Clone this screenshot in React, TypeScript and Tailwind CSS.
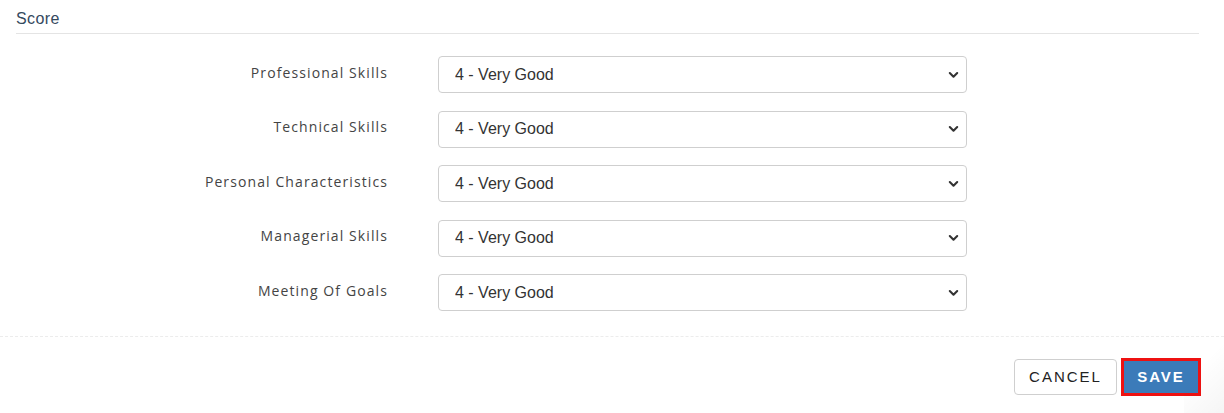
import React from "react";

const rows = [
  "Professional Skills",
  "Technical Skills",
  "Personal Characteristics",
  "Managerial Skills",
  "Meeting Of Goals",
];

function Chevron() {
  return (
    <svg width="11" height="8" viewBox="0 0 11 8" className="absolute right-[8px] top-1/2 -translate-y-1/2 pointer-events-none">
      <path d="M1.8 2 L5.5 5.7 L9.2 2" fill="none" stroke="#333" strokeWidth="2.1" strokeLinecap="round" strokeLinejoin="round" />
    </svg>
  );
}

export default function App() {
  return (
    <div className="w-[1224px] h-[413px] bg-white relative overflow-hidden" style={{ fontFamily: '"Liberation Sans", Arial, sans-serif' }}>
      <div className="px-4">
        <div className="pt-[9px] pb-[5px] border-b border-[#e4e4e4] mr-[9px] text-[16px] leading-[19px] tracking-[0.4px] text-[#34495e]">
          Score
        </div>
        <div className="flex flex-col gap-[17.5px] pt-[22px]">
          {rows.map((r) => (
            <div key={r} className="flex items-center h-[37px]">
              <div
                className="w-[372px] text-right text-[14px] tracking-[1.1px] text-[#444] -mt-[5px]"
                style={{ fontFamily: '"Open Sans", sans-serif' }}
              >
                {r}
              </div>
              <div className="relative ml-[50px] w-[529px] h-[37px]">
                <select
                  defaultValue="4"
                  className="appearance-none w-full h-full border border-[#cfcfcf] rounded-[4px] bg-white pl-[16px] text-[16px] text-[#333] outline-none"
                  style={{ fontFamily: '"Liberation Sans", Arial, sans-serif' }}
                >
                  <option value="4">4 - Very Good</option>
                </select>
                <Chevron />
              </div>
            </div>
          ))}
        </div>
      </div>
      <div className="mt-[25px] border-t border-dashed border-[#ececec]" />
      <div className="flex justify-end items-center gap-[4px] pt-[21px] pr-[23px]">
        <button className="h-[36px] w-[103px] border border-[#cfcfcf] rounded-[4px] bg-white text-[15px] tracking-[2px] text-[#222]">
          CANCEL
        </button>
        <button className="h-[38px] w-[80px] border-[3px] border-[#ee1111] bg-[#3b7bb9] text-[15px] tracking-[2px] text-white font-bold">
          SAVE
        </button>
      </div>
      <div className="absolute right-0 bottom-0 w-[40px] h-[80px] pointer-events-none" style={{ background: "linear-gradient(135deg, rgba(255,255,255,0) 40%, rgba(0,0,0,0.04) 100%)" }} />
    </div>
  );
}
